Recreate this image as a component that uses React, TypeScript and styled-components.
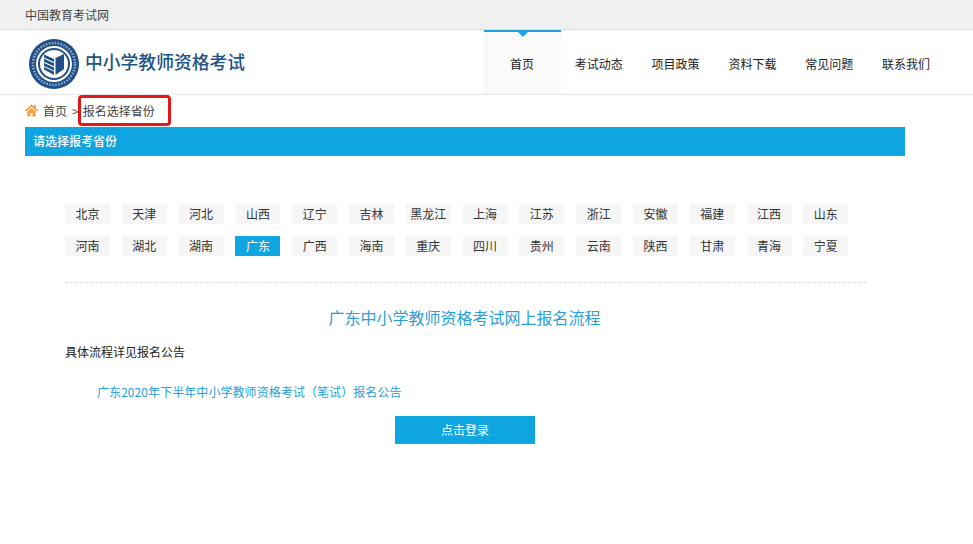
import React from "react";
import styled, { createGlobalStyle } from "styled-components";

const Global = createGlobalStyle`
  html, body { margin: 0; padding: 0; background: #fff; }
  body { font-family: "Noto Sans CJK SC", "Noto Sans", sans-serif; font-size: 12px; color: #333; }
  * { box-sizing: border-box; }
`;

const Page = styled.div`
  width: 973px;
  height: 544px;
  overflow: hidden;
  background: #fff;
`;

const TopBar = styled.div`
  position: relative;
  height: 30px;
  padding-left: 25px;
  background: #f0f0f0;
  border-bottom: 1px solid #dedede;
  line-height: 30px;
  color: #444;
  overflow: hidden;
`;

const TopDecor = styled.svg`
  position: absolute;
  left: 190px;
  top: 0;
`;

const Header = styled.header`
  height: 65px;
  display: flex;
  justify-content: space-between;
  border-bottom: 1px solid #e6e6e6;
`;

const Brand = styled.div`
  display: flex;
  align-items: center;
  gap: 6px;
  padding: 4px 0 0 29px;
`;

const BrandName = styled.div`
  margin-bottom: 7px;
  font-size: 17.8px;
  font-weight: 500;
  line-height: 24px;
  white-space: nowrap;
  color: #1d5385;
`;

const Nav = styled.nav`
  width: 461px;
  margin-right: 28px;
  display: grid;
  grid-template-columns: repeat(6, 1fr);
`;

const NavItem = styled.a<{ $active?: boolean }>`
  position: relative;
  display: flex;
  align-items: center;
  justify-content: center;
  padding-right: 1px;
  color: #222;
  background: ${(p) => (p.$active ? "#f9f9f9" : "transparent")};
  border-top: 2px solid ${(p) => (p.$active ? "#1ca6e2" : "transparent")};
  ${(p) =>
    p.$active &&
    `
    &::after {
      content: "";
      position: absolute;
      left: 34px;
      top: 0;
      border-left: 5px solid transparent;
      border-right: 5px solid transparent;
      border-top: 5px solid #1ca6e2;
    }
  `}
`;

const Crumbs = styled.div`
  position: relative;
  height: 32px;
  padding: 0 0 2px 25px;
  display: flex;
  align-items: center;
  color: #444;
`;

const Crumb = styled.span`
  margin-left: 5px;
`;

const Sep = styled.span`
  margin: 0 -1px 0 5px;
  color: #555;
`;

const RedBox = styled.div`
  position: absolute;
  left: 78px;
  top: 0;
  width: 93px;
  height: 31px;
  border: 3px solid #e3181b;
  border-radius: 4px;
`;

const SectionBar = styled.div`
  width: 880px;
  height: 29px;
  margin-left: 25px;
  padding: 0 0 2px 8px;
  background: #0ea5e0;
  color: #fff;
  font-weight: 500;
  line-height: 27px;
`;

const Content = styled.main`
  width: 801px;
  margin-left: 65px;
  padding-top: 48px;
`;

const Provinces = styled.div`
  display: grid;
  grid-template-columns: repeat(14, 45px);
  column-gap: 11.8px;
  row-gap: 12px;
  padding-bottom: 26px;
  border-bottom: 1px dashed #dcdcdc;
`;

const Province = styled.a<{ $active?: boolean }>`
  height: 20px;
  line-height: 20px;
  text-align: center;
  white-space: nowrap;
  background: ${(p) => (p.$active ? "#0ea5e0" : "#f6f6f6")};
  color: ${(p) => (p.$active ? "#fff" : "#333")};
`;

const FlowTitle = styled.h2`
  margin: 22px 2px 0 0;
  font-size: 16px;
  font-weight: 400;
  line-height: 24px;
  text-align: center;
  color: #2a9ed8;
`;

const Note = styled.p`
  margin: 13px 0 0;
  line-height: 20px;
  color: #222;
`;

const NoticeLink = styled.a`
  display: block;
  margin: 20px 0 0 32px;
  line-height: 20px;
  letter-spacing: 0.07px;
  color: #2a9ed8;
`;

const LoginButton = styled.button`
  display: block;
  width: 140px;
  height: 28px;
  margin: 14px 0 0 330px;
  padding: 0 0 2px;
  border: 0;
  background: #0ea5e0;
  color: #fff;
  font: inherit;
`;

const row1 = ["北京","天津","河北","山西","辽宁","吉林","黑龙江","上海","江苏","浙江","安徽","福建","江西","山东"];
const row2 = ["河南","湖北","湖南","广东","广西","海南","重庆","四川","贵州","云南","陕西","甘肃","青海","宁夏"];
const navItems = ["首页","考试动态","项目政策","资料下载","常见问题","联系我们"];

const Logo = () => (
  <svg width="50" height="50" viewBox="0 0 50 50">
    <circle cx="25" cy="25" r="25" fill="#1f4f86" />
    <circle cx="25" cy="25" r="21" fill="none" stroke="#8ea8c8" strokeWidth="2.6" strokeDasharray="1.6 1.4" />
    <circle cx="25" cy="25" r="18" fill="#fff" />
    <circle cx="25" cy="25" r="16" fill="#1f4f86" />
    <circle cx="25" cy="25" r="14" fill="#fff" />
    <path d="M26.5 19 L35 15 V30 L26.5 36 Z" fill="#1f4f86" />
    <path d="M25 20 L15 15.5 V18.5 L25 23 Z M25 24.2 L15 19.7 V22.7 L25 27.2 Z M25 28.4 L15 23.9 V26.9 L25 31.4 Z M25 32.6 L15 28.1 V30.6 L25 36 Z" fill="#1f4f86" />
  </svg>
);

const HomeIcon = () => (
  <svg width="13" height="13" viewBox="0 0 13 13">
    <path d="M6.5 0.5 L0 6.6 L1 7.6 L6.5 2.6 L12 7.6 L13 6.6 L10.8 4.5 V1 H9 V2.8 Z" fill="#f0902a" />
    <path d="M2.3 7.6 L6.5 3.8 L10.7 7.6 V12.6 H7.6 V9 H5.4 V12.6 H2.3 Z" fill="#f5a13c" />
  </svg>
);

export default function App() {
  return (
    <Page>
      <Global />
      <TopBar>
        中国教育考试网
        <TopDecor width="80" height="30" viewBox="0 0 80 30" fill="none" stroke="#f3f3f3" strokeWidth="1.5">
          <path d="M3 30 Q 12 18 20 0 M 28 0 Q 34 18 43 30 M 52 30 L 60 14 L 70 30" />
        </TopDecor>
      </TopBar>
      <Header>
        <Brand>
          <Logo />
          <BrandName>中小学教师资格考试</BrandName>
        </Brand>
        <Nav>
          {navItems.map((n, i) => (
            <NavItem key={n} $active={i === 0}>{n}</NavItem>
          ))}
        </Nav>
      </Header>
      <Crumbs>
        <HomeIcon />
        <Crumb>首页</Crumb>
        <Sep>&gt;</Sep>
        <Crumb>报名选择省份</Crumb>
        <RedBox />
      </Crumbs>
      <SectionBar>请选择报考省份</SectionBar>
      <Content>
        <Provinces>
          {[...row1, ...row2].map((p) => (
            <Province key={p} $active={p === "广东"}>{p}</Province>
          ))}
        </Provinces>
        <FlowTitle>广东中小学教师资格考试网上报名流程</FlowTitle>
        <Note>具体流程详见报名公告</Note>
        <NoticeLink>广东2020年下半年中小学教师资格考试（笔试）报名公告</NoticeLink>
        <LoginButton>点击登录</LoginButton>
      </Content>
    </Page>
  );
}
